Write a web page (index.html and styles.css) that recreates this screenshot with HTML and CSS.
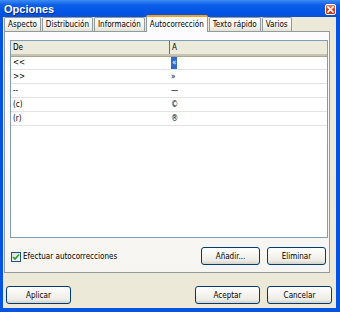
FILE: index.html
```html
<!DOCTYPE html>
<html lang="es">
<head>
  <meta charset="UTF-8">
  <title>Opciones</title>
  <link rel="stylesheet" href="styles.css">
</head>
<body>
  <div class="window">
    <div class="titlebar">
      <span class="title">Opciones</span>
      <span class="close">
        <svg width="7" height="7" viewBox="0 0 7 7"><path d="M1 1 L6 6 M6 1 L1 6" stroke="#fff" stroke-width="1.6" stroke-linecap="square"/></svg>
      </span>
    </div>

    <div class="client">
      <!-- pestañas -->
      <div class="tabs">
        <div class="tab">Aspecto</div>
        <div class="tab">Distribución</div>
        <div class="tab">Información</div>
        <div class="tab active">Autocorrección</div>
        <div class="tab">Texto rápido</div>
        <div class="tab">Varios</div>
      </div>

      <div class="panel">
        <div class="list">
          <div class="list-head">
            <div class="col">De</div>
            <div class="col">A</div>
          </div>
          <div class="row"><div class="col">&lt;&lt;</div><div class="col"><span class="sel">«</span></div></div>
          <div class="row"><div class="col">&gt;&gt;</div><div class="col">»</div></div>
          <div class="row"><div class="col">--</div><div class="col">—</div></div>
          <div class="row"><div class="col">(c)</div><div class="col">©</div></div>
          <div class="row"><div class="col">(r)</div><div class="col">®</div></div>
        </div>

        <div class="panel-foot">
          <label class="check">
            <span class="box">
              <svg width="8" height="8" viewBox="0 0 8 8"><path d="M1 4 L3 6 L7 1.5" fill="none" stroke="#21a121" stroke-width="1.6"/></svg>
            </span>
            Efectuar autocorrecciones
          </label>
          <div class="btns">
            <button class="btn">Añadir...</button>
            <button class="btn">Eliminar</button>
          </div>
        </div>
      </div>

      <div class="dialog-foot">
        <button class="btn wide">Aplicar</button>
        <div class="btns">
          <button class="btn wide">Aceptar</button>
          <button class="btn wide">Cancelar</button>
        </div>
      </div>
    </div>
  </div>
</body>
</html>
```

FILE: styles.css
```css
body {
  margin: 0;
  font-family: "DejaVu Sans Condensed", "DejaVu Sans", sans-serif;
  font-stretch: condensed;
  font-size: 8px;
  color: #000;
}
.window {
  width: 340px;
  height: 312px;
  display: flex;
  flex-direction: column;
  background: #0553e2;
  box-sizing: border-box;
}
.titlebar {
  height: 17px;
  display: flex;
  align-items: center;
  justify-content: space-between;
  padding: 0 4px 0 4px;
  background: linear-gradient(#3f8cf3, #0a5ee8 30%, #0055e5 70%, #0a4fd6);
}
.title {
  color: #fff;
  font-family: "Liberation Sans", Arial, sans-serif;
  font-stretch: normal;
  font-weight: bold;
  font-size: 11px;
  text-shadow: 1px 1px 0 #0a2a8a;
}
.close {
  width: 11px;
  height: 11px;
  margin-top: 1px;
  box-sizing: border-box;
  border: 1px solid #fff;
  border-radius: 2px;
  background: linear-gradient(#e8866a, #d9431c 50%, #c3360f);
  display: flex;
  align-items: center;
  justify-content: center;
}
.client {
  flex: 1;
  margin: 0 4px 4px 3px;
  background: #ece9d8;
  display: flex;
  flex-direction: column;
}
.tabs {
  display: flex;
  align-items: flex-end;
  gap: 1px;
  height: 14px;
  padding-left: 1px;
}
.tab {
  height: 14px;
  box-sizing: border-box;
  padding: 1px 3px 0;
  line-height: 12px;
  border: 1px solid #919b9c;
  border-bottom: none;
  border-radius: 2px 2px 0 0;
  background: linear-gradient(#fefefe, #f4f3ee 60%, #e4e1d4);
  white-space: nowrap;
}
.tab.active {
  height: 17px;
  margin-bottom: -1px;
  padding-top: 2px;
  border-top: 2px solid #f4a31e;
  background: #fcfcfe;
  position: relative;
  z-index: 1;
}
.panel {
  height: 242px;
  width: 326px;
  margin-left: 1px;
  box-sizing: border-box;
  border: 1px solid #919b9c;
  background: linear-gradient(#fcfcfe, #f6f5f1);
  padding: 8px 1px 0 5px;
  display: flex;
  flex-direction: column;
}
.list {
  height: 198px;
  box-sizing: border-box;
  border: 1px solid #7f9db9;
  background: #fff;
}
.list-head {
  display: flex;
  height: 15px;
  box-sizing: border-box;
  background: #ebeadb;
  border-bottom: 2px solid #c7c3b2;
  box-shadow: 0 1px 0 #a9a591;
}
.list-head .col {
  line-height: 13px;
}
.list-head .col + .col {
  border-left: 1px solid #6f6c5f;
}
.row {
  display: flex;
  height: 14px;
  box-sizing: border-box;
  border-bottom: 1px solid #e3e3e3;
}
.row:first-of-type {
  margin-top: 1px;
}
.col {
  width: 156px;
  padding-left: 2px;
  line-height: 13px;
}
.col + .col {
  flex: 1;
  padding-left: 2px;
}
.sel {
  background: #316ac5;
  color: #fff;
  padding: 0 1px;
  display: inline-block;
  line-height: 12px;
}
.panel-foot {
  display: flex;
  justify-content: space-between;
  align-items: center;
  margin-top: 9px;
  padding-right: 2px;
}
.check {
  display: flex;
  align-items: center;
  gap: 2px;
  margin-left: 1px;
  margin-top: 1px;
}
.box {
  width: 10px;
  height: 10px;
  box-sizing: border-box;
  border: 1px solid #1c5180;
  background: linear-gradient(135deg, #dcdcd7, #fff);
  display: flex;
  align-items: center;
  justify-content: center;
}
.btns {
  display: flex;
  gap: 7px;
}
.btn {
  width: 59px;
  height: 18px;
  padding: 0;
  font: inherit;
  color: #000;
  border: 1px solid #003c74;
  border-radius: 3px;
  background: linear-gradient(#fff, #f4f3ee 50%, #ecebe6 80%, #d6d0c5);
}
.dialog-foot {
  display: flex;
  justify-content: space-between;
  margin-top: 13px;
  padding: 0 4px 0 3px;
}
.btn.wide {
  width: 65px;
}
```
